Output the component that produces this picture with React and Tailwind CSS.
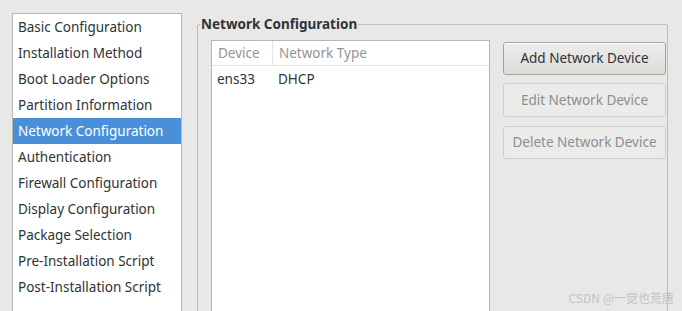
export default function App() {
  const items = [
    "Basic Configuration",
    "Installation Method",
    "Boot Loader Options",
    "Partition Information",
    "Network Configuration",
    "Authentication",
    "Firewall Configuration",
    "Display Configuration",
    "Package Selection",
    "Pre-Installation Script",
    "Post-Installation Script",
  ];
  return (
    <div className="relative flex h-[311px] w-[682px] overflow-hidden bg-[#e8e8e7] pl-[12px] pt-[13px] font-['Noto_Sans',sans-serif] text-[13.5px] text-[#2e3436]">
      <div className="h-[320px] w-[170px] shrink-0 border border-[#b6b6b3] bg-white">
        {items.map((t) => (
          <div
            key={t}
            className={
              "flex h-[26px] items-center pl-[5px] " +
              (t === "Network Configuration" ? "bg-[#4a90d9] text-white" : "")
            }
          >
            {t}
          </div>
        ))}
      </div>
      <fieldset className="ml-[15px] h-[320px] w-[471px] shrink-0 rounded-[2px] border border-[#bdbdba]">
        <legend className="ml-[2px] px-[1px] font-bold leading-[22px]">Network Configuration</legend>
        <div className="mt-[5px] flex pl-[13px]">
          <div className="h-[300px] w-[279px] shrink-0 border border-[#b6b6b3] bg-white">
            <div className="flex h-[25px] items-center border-b border-[#e3e3e1] text-[#929595]">
              <div className="flex h-full w-[61px] items-center border-r border-[#e3e3e1] pl-[6px]">Device</div>
              <div className="pl-[6px]">Network Type</div>
            </div>
            <div className="flex h-[26px] items-center">
              <div className="w-[61px] pl-[5px]">ens33</div>
              <div className="pl-[5px]">DHCP</div>
            </div>
          </div>
          <div className="ml-[13px] mt-[2px] flex w-[163px] flex-col">
            <button className="h-[33px] rounded-[3px] border border-[#a1a1a1] bg-gradient-to-b from-[#eeedec] to-[#dedcd9] text-[#2e3436] shadow-[inset_0_1px_0_#ffffff]">
              Add Network Device
            </button>
            <button className="mt-[8px] h-[34px] rounded-[3px] border border-[#cfcfcd] bg-[#ebebea] text-[#8b8e8f]">
              Edit Network Device
            </button>
            <button className="mt-[9px] h-[33px] rounded-[3px] border border-[#cfcfcd] bg-[#ebebea] text-[#8b8e8f]">
              Delete Network Device
            </button>
          </div>
        </div>
      </fieldset>
      <div className="absolute right-[8px] top-[289px] font-['Noto_Sans_CJK_SC',sans-serif] text-[12px] leading-[18px] text-[#c4c4c4]">
        CSDN @一觉也荒唐
      </div>
    </div>
  );
}
